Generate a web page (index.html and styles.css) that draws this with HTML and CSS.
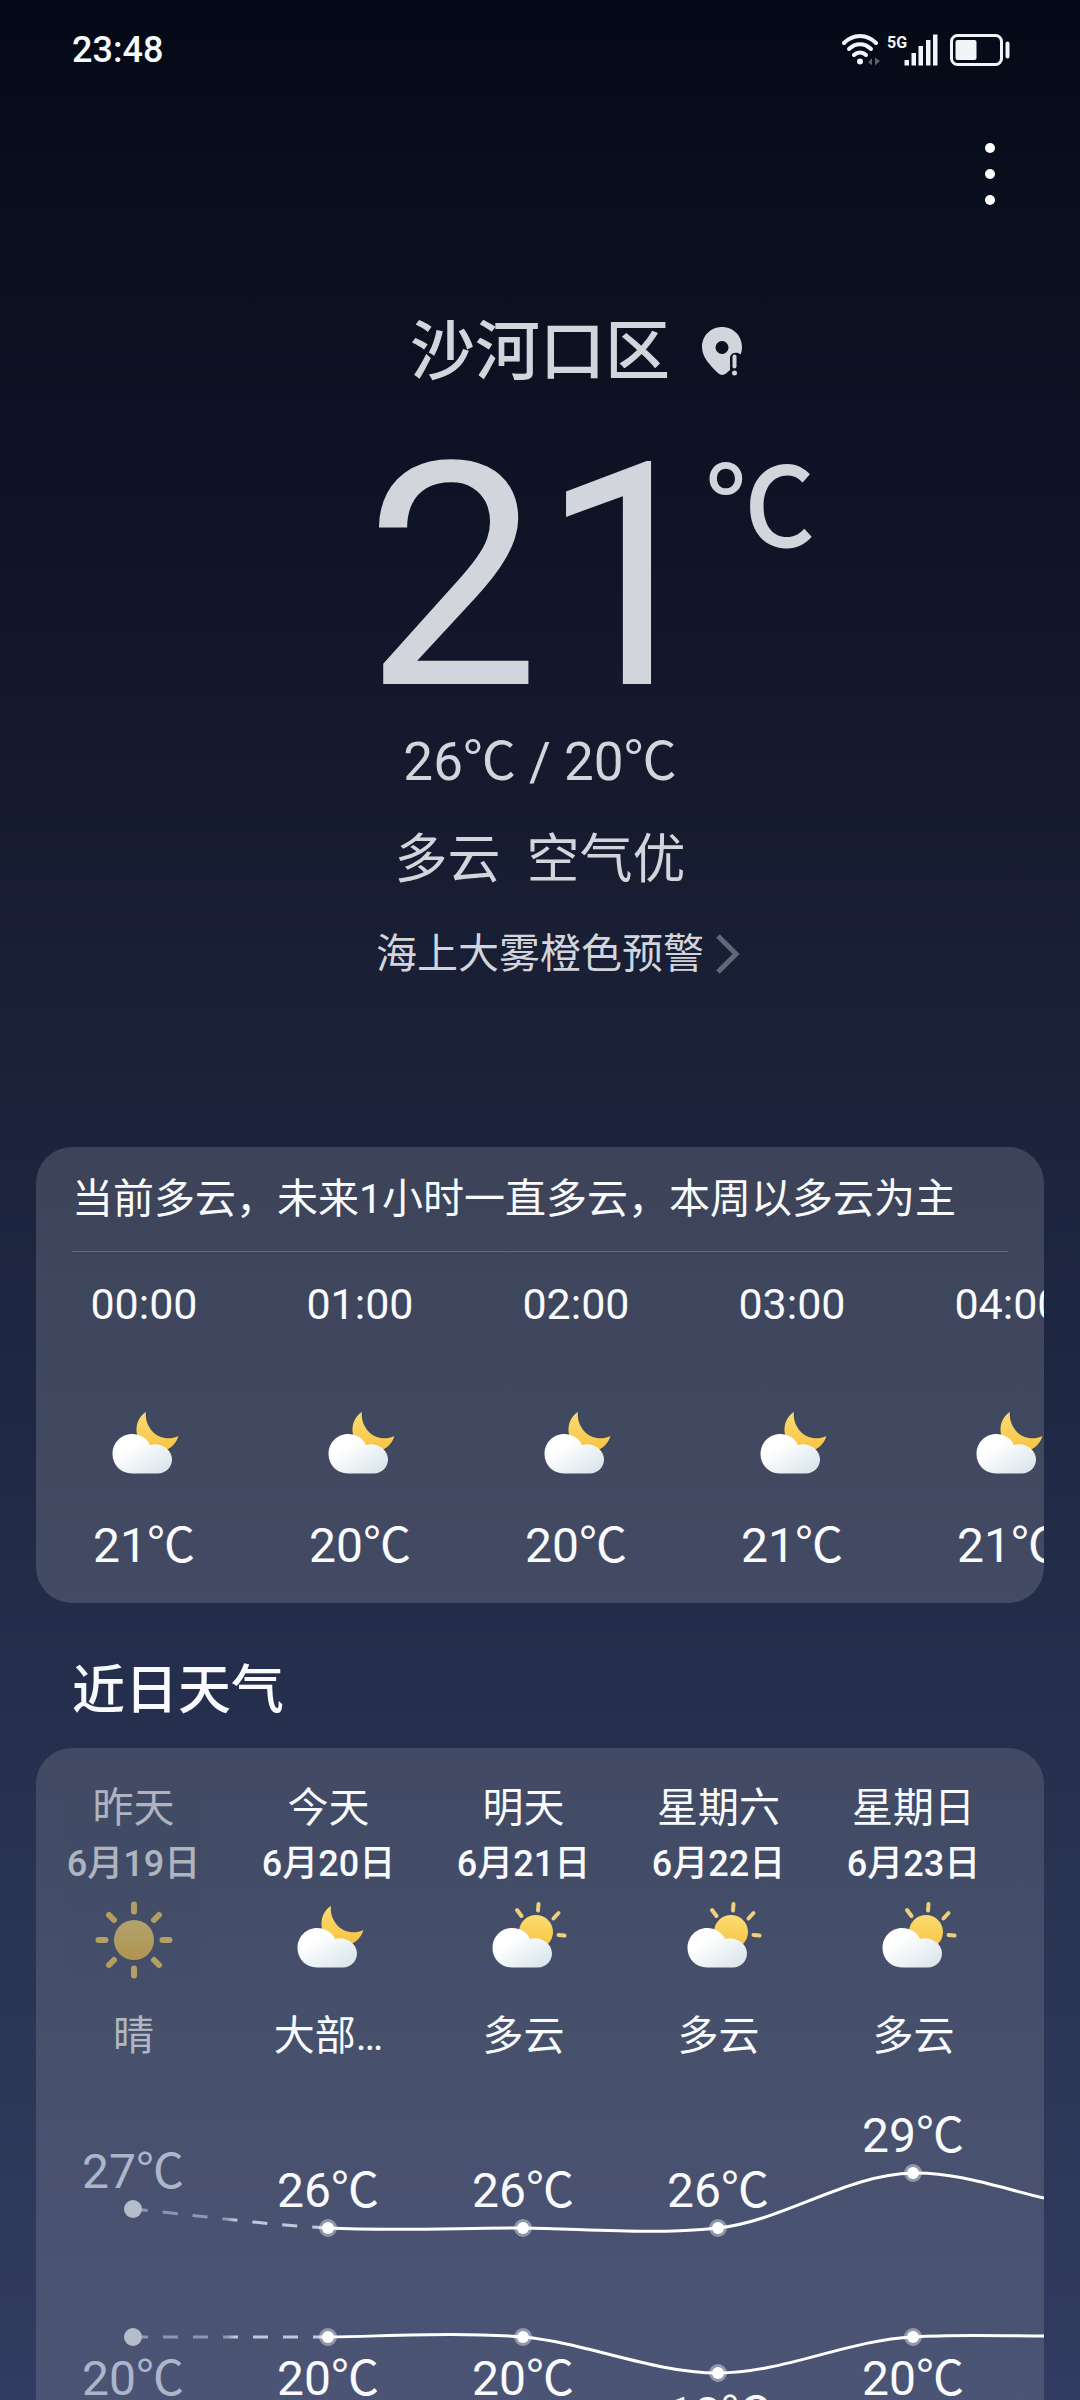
FILE: index.html
```html
<!DOCTYPE html>
<html lang="zh-CN">
<head>
    <meta charset="UTF-8">
    <meta name="viewport" content="width=device-width, initial-scale=1.0">
    <title>天气</title>
    <link rel="stylesheet" href="styles.css">
</head>
<body>
    <!-- Shared weather icons -->
    <svg class="sprite" aria-hidden="true">
        <defs>
            <linearGradient id="cloudFill" x1="0" y1="0" x2="1" y2="1">
                <stop offset="0.3" stop-color="#ffffff"/>
                <stop offset="1" stop-color="#d5e2e8"/>
            </linearGradient>
            <linearGradient id="sunFill" x1="0" y1="0" x2="0" y2="1">
                <stop offset="0" stop-color="#fbdc72"/>
                <stop offset="1" stop-color="#f8c341"/>
            </linearGradient>
            <symbol id="cloud" viewBox="0 0 80 80">
                <path d="M28 28 C36 28 43 32 46 39 C56 36 68 43 68 53.500 C68 61 62 67.500 54 67.500 H28 C17 67.500 8.500 59 8.500 48 C8.500 37 17 28 28 28 Z" fill="url(#cloudFill)"/>
            </symbol>
            <symbol id="cloudy-night" viewBox="0 0 80 80">
                <path d="M42 6 C29 14 30 33 41 41 C53 50 70 45 74.500 30 C66 34 55 33 48 25 C43 19 41 12 42 6 Z" fill="url(#sunFill)"/>
                <use href="#cloud" width="80" height="80"/>
            </symbol>
            <symbol id="cloudy-day" viewBox="0 0 84 80">
                <g stroke="#eed07c" stroke-width="4" stroke-linecap="round">
                    <path d="M54.500 4 L54 10.500 M33 10 L37.500 16 M74.500 13 L69.500 18.500 M74.500 35 L80.500 35.500"/>
                </g>
                <circle cx="52" cy="32" r="17" fill="url(#sunFill)"/>
                <use href="#cloud" width="80" height="80"/>
            </symbol>
            <symbol id="sunny" viewBox="0 0 80 80">
                <g stroke="#fbd75c" stroke-width="6" stroke-linecap="round">
                    <path d="M40 4.500 V11.500 M40 68.500 V75.500 M4.500 40 H11.500 M68.500 40 H75.500 M15 15 L20 20 M60 60 L65 65 M65 15 L60 20 M20 60 L15 65"/>
                </g>
                <circle cx="40" cy="40" r="20" fill="url(#sunFill)"/>
            </symbol>
        </defs>
    </svg>

    <main class="app">
        <div class="status-bar">
            <span class="clock">23:48</span>
            <svg class="status-icons" viewBox="0 0 168 34" fill="#f1f4f8">
                <!-- wifi -->
                <g fill="none" stroke="#f1f4f8" stroke-width="4" stroke-linecap="round">
                    <path d="M2 10 C11 0.500 25 0.500 34 10"/>
                    <path d="M7 16 C13.500 9.500 22.500 9.500 29 16"/>
                    <path d="M12 22 C15.500 18.500 20.500 18.500 24 22"/>
                </g>
                <circle cx="18" cy="28.500" r="3"/>
                <path d="M26 29.500 L30 25 V32 Z M38 28 L33 24.500 V32.500 Z" fill="#5d616d"/>
                <!-- mobile signal -->
                <text class="network" x="45" y="15">5G</text>
                <path d="M62.500 27 h4.500 v5.500 h-4.500 Z M69.500 20 h4.500 v12.500 h-4.500 Z M76.500 13 h4.500 v19.500 h-4.500 Z M84 7 h4.500 v25.500 h-4.500 Z M91 1.500 h4.500 v31 h-4.500 Z"/>
                <!-- battery -->
                <rect x="109.500" y="2.500" width="50" height="29" rx="6" fill="none" stroke="#f1f4f8" stroke-width="3"/>
                <rect x="113.500" y="7" width="21" height="20" rx="2"/>
                <rect x="163.500" y="8.500" width="4" height="17" rx="2"/>
            </svg>
        </div>

        <div class="toolbar">
            <button class="menu-btn" type="button" aria-label="更多">
                <span class="dot"></span>
                <span class="dot"></span>
                <span class="dot"></span>
            </button>
        </div>

        <section class="current">
            <div class="centered location">
                <h1>沙河口区</h1>
                <svg class="pin" viewBox="0 0 40 50">
                    <path fill-rule="evenodd" d="M20 0 C31 0 40 8.500 40 20 C40 23 39.500 25 38.500 27.500 C36 24.500 29 25 28 30 V43 L24 46.500 C21.500 48.500 18.500 48.500 16 46 C8 38.500 0 30 0 20 C0 8.500 9 0 20 0 Z M20 14 A6.500 6.500 0 1 0 20 27 A6.500 6.500 0 1 0 20 14 Z" fill="#d2d5dc"/>
                    <path d="M32.500 29.500 V39.500" stroke="#d2d5dc" stroke-width="4" stroke-linecap="round"/>
                    <circle cx="32.500" cy="46" r="2.500" fill="#d2d5dc"/>
                </svg>
            </div>
            <div class="centered temperature">
                <span class="degrees">21</span>
                <span class="unit">℃</span>
            </div>
            <p class="range">26℃ / 20℃</p>
            <p class="condition"><span>多云</span><span>空气优</span></p>
            <a class="centered alert" href="#">
                <span class="alert-text">海上大雾橙色预警</span>
                <svg class="chevron" viewBox="0 0 24 40">
                    <path d="M2 2 L20 20 L2 38" fill="none" stroke="#626878" stroke-width="5"/>
                </svg>
            </a>
        </section>

        <section class="card hourly">
            <p class="summary">当前多云，未来1小时一直多云，本周以多云为主</p>
            <div class="hours">
                <div class="hour">
                    <span class="time">00:00</span>
                    <svg class="icon"><use href="#cloudy-night"/></svg>
                    <span class="temp">21℃</span>
                </div>
                <div class="hour">
                    <span class="time">01:00</span>
                    <svg class="icon"><use href="#cloudy-night"/></svg>
                    <span class="temp">20℃</span>
                </div>
                <div class="hour">
                    <span class="time">02:00</span>
                    <svg class="icon"><use href="#cloudy-night"/></svg>
                    <span class="temp">20℃</span>
                </div>
                <div class="hour">
                    <span class="time">03:00</span>
                    <svg class="icon"><use href="#cloudy-night"/></svg>
                    <span class="temp">21℃</span>
                </div>
                <div class="hour">
                    <span class="time">04:00</span>
                    <svg class="icon"><use href="#cloudy-night"/></svg>
                    <span class="temp">21℃</span>
                </div>
            </div>
        </section>

        <h2>近日天气</h2>

        <section class="card daily">
            <div class="days">
                <div class="day past">
                    <span class="name">昨天</span>
                    <span class="date">6月19日</span>
                    <svg class="icon"><use href="#sunny"/></svg>
                    <span class="label">晴</span>
                </div>
                <div class="day">
                    <span class="name">今天</span>
                    <span class="date">6月20日</span>
                    <svg class="icon"><use href="#cloudy-night"/></svg>
                    <span class="label">大部…</span>
                </div>
                <div class="day">
                    <span class="name">明天</span>
                    <span class="date">6月21日</span>
                    <svg class="icon"><use href="#cloudy-day" width="84" height="80"/></svg>
                    <span class="label">多云</span>
                </div>
                <div class="day">
                    <span class="name">星期六</span>
                    <span class="date">6月22日</span>
                    <svg class="icon"><use href="#cloudy-day" width="84" height="80"/></svg>
                    <span class="label">多云</span>
                </div>
                <div class="day">
                    <span class="name">星期日</span>
                    <span class="date">6月23日</span>
                    <svg class="icon"><use href="#cloudy-day" width="84" height="80"/></svg>
                    <span class="label">多云</span>
                </div>
            </div>

            <!-- High / low temperature curves -->
            <svg class="chart" viewBox="0 0 1008 400">
                <defs>
                    <linearGradient id="dashFill" gradientUnits="userSpaceOnUse" x1="97" y1="0" x2="292" y2="0">
                        <stop offset="0.48" stop-color="#8d97b1"/>
                        <stop offset="0.52" stop-color="#c0c8dd"/>
                    </linearGradient>
                </defs>
                <g class="dashed">
                    <path d="M97 145 C150 150 230 161 292 164"/>
                    <path d="M97 273 H292"/>
                </g>
                <g class="line">
                    <path d="M292 164 C357 167 422 164 487 164 C552 165 617 171 682 164 C747 157 812 110 877 109 C920 108 965 124 1008 134"/>
                    <path d="M292 273 C357 272 422 268 487 273 C552 279 617 309 682 309 C747 309 812 276 877 273 C920 270 965 272 1008 272"/>
                </g>
                <g class="past-point">
                    <circle cx="97" cy="145" r="9"/>
                    <circle cx="97" cy="273" r="9"/>
                </g>
                <g class="point">
                    <circle cx="292" cy="164" r="6"/>
                    <circle cx="487" cy="164" r="6"/>
                    <circle cx="682" cy="164" r="6"/>
                    <circle cx="877" cy="109" r="6"/>
                    <circle cx="292" cy="273" r="6"/>
                    <circle cx="487" cy="273" r="6"/>
                    <circle cx="682" cy="309" r="6"/>
                    <circle cx="877" cy="273" r="6"/>
                </g>
                <g class="values">
                    <text class="past-value" x="97" y="124">27℃</text>
                    <text x="292" y="143">26℃</text>
                    <text x="487" y="143">26℃</text>
                    <text x="682" y="143">26℃</text>
                    <text x="877" y="88">29℃</text>
                    <text class="past-value" x="97" y="331">20℃</text>
                    <text x="292" y="331">20℃</text>
                    <text x="487" y="331">20℃</text>
                    <text x="682" y="367">18℃</text>
                    <text x="877" y="331">20℃</text>
                </g>
            </svg>
        </section>
    </main>
</body>
</html>
```
FILE: styles.css
```css
* {
    box-sizing: border-box;
}

body {
    margin: 0;
    font-family: Roboto, "Noto Sans CJK SC", sans-serif;
    color: #f8fafd;
    background: #313b60;
}

h1, h2, p {
    margin: 0;
    font-weight: 500;
}

.sprite {
    position: absolute;
    width: 0;
    height: 0;
}

.app {
    height: 100vh;
    overflow-y: auto;
    scrollbar-width: none;
    background: linear-gradient(#030916 0%, #0a101f 10%, #0e1326 21%, #14192d 31%, #1a2036 42%, #1c243e 49%, #202945 61%, #252e4c 70%, #2c3757 86%, #323b61 100%);
}

/* Status bar */
.status-bar {
    display: flex;
    align-items: center;
    justify-content: space-between;
    height: 100px;
    padding: 0 70px 0 72px;
}

.clock {
    font-size: 36px;
    font-weight: 500;
}

.status-icons {
    width: 168px;
    height: 34px;
}

.network {
    font-size: 16px;
    font-weight: 700;
}

.toolbar {
    display: flex;
    justify-content: flex-end;
    padding: 34px 50px;
}

.menu-btn {
    display: flex;
    flex-direction: column;
    align-items: center;
    justify-content: center;
    gap: 16px;
    width: 80px;
    height: 80px;
    padding: 0;
    border: none;
    background: none;
    cursor: pointer;
}

.dot {
    width: 10px;
    height: 10px;
    border-radius: 50%;
    background: #fff;
}

/* Current weather */
.current {
    padding: 64px 36px 0;
    color: #d2d5dc;
    text-align: center;
}

/* Keeps the middle item centered, the extra hangs on its right */
.centered {
    display: grid;
    grid-template-columns: 1fr auto 1fr;
}

.centered > :first-child {
    grid-column: 2;
}

.location {
    align-items: center;
}

.location h1 {
    font-size: 65px;
    line-height: 80px;
    font-weight: 500;
}

.pin {
    width: 40px;
    height: 50px;
    margin-left: 32px;
}

.temperature {
    margin-top: 36px;
}

.degrees {
    font-size: 312px;
    line-height: 300px;
}

.unit {
    margin-left: -10px;
    font-size: 110px;
    line-height: 164px;
    font-weight: 500;
    justify-self: start;
}

.range {
    font-size: 53px;
    line-height: 68px;
    font-weight: 400;
}

.condition {
    display: flex;
    justify-content: center;
    gap: 26px;
    margin-top: 24px;
    font-size: 53px;
    line-height: 80px;
    font-weight: 400;
}

.alert {
    align-items: center;
    margin-top: 26px;
    color: inherit;
    font-size: 41px;
    line-height: 56px;
    text-decoration: none;
}

.chevron {
    width: 24px;
    height: 40px;
    margin-left: 12px;
}

/* Cards */
.card {
    margin: 0 36px;
    overflow: hidden;
    border-radius: 36px;
    background: rgba(255, 255, 255, 0.15);
}

.hourly {
    margin-top: 165px;
    padding-bottom: 25px;
}

.summary {
    margin: 0 36px;
    border-bottom: 1px solid #5f6b78;
    font-size: 41px;
    line-height: 104px;
    font-weight: 400;
    white-space: nowrap;
}

.hours, .days {
    display: flex;
}

.hour, .day {
    display: flex;
    flex-direction: column;
    flex-shrink: 0;
    align-items: center;
}

.hour {
    width: 216px;
    padding-top: 24px;
}

.time {
    font-size: 43px;
    line-height: 56px;
}

.icon {
    width: 80px;
    height: 80px;
    overflow: visible;
}

.hour .icon {
    margin: 74px 0 28px;
}

.temp {
    font-size: 48px;
    line-height: 64px;
}

h2 {
    padding: 48px 72px 17px;
    font-size: 53px;
    line-height: 80px;
}

.daily {
    padding-top: 32px;
    border-radius: 36px 36px 0 0;
    background: rgba(255, 255, 255, 0.13);
}

.day {
    width: 195px;
    font-size: 41px;
    line-height: 56px;
}

.date {
    font-size: 36px;
    font-weight: 500;
}

.day .icon {
    margin: 8px 0 28px;
}

.past {
    opacity: 0.6;
}

/* Temperature chart */
.chart {
    display: block;
    width: 100%;
}

.line {
    fill: none;
    stroke: #fff;
    stroke-width: 3;
}

.dashed {
    fill: none;
    stroke: url(#dashFill);
    stroke-width: 3;
    stroke-dasharray: 15 15;
}

.past-point {
    fill: #b5bdca;
}

.point {
    fill: #fff;
    stroke: rgba(255, 255, 255, 0.4);
    stroke-width: 6;
    paint-order: stroke;
}

.values {
    fill: #f8fafd;
    font-size: 48px;
    text-anchor: middle;
}

.past-value {
    fill: #acb5ca;
}
```
